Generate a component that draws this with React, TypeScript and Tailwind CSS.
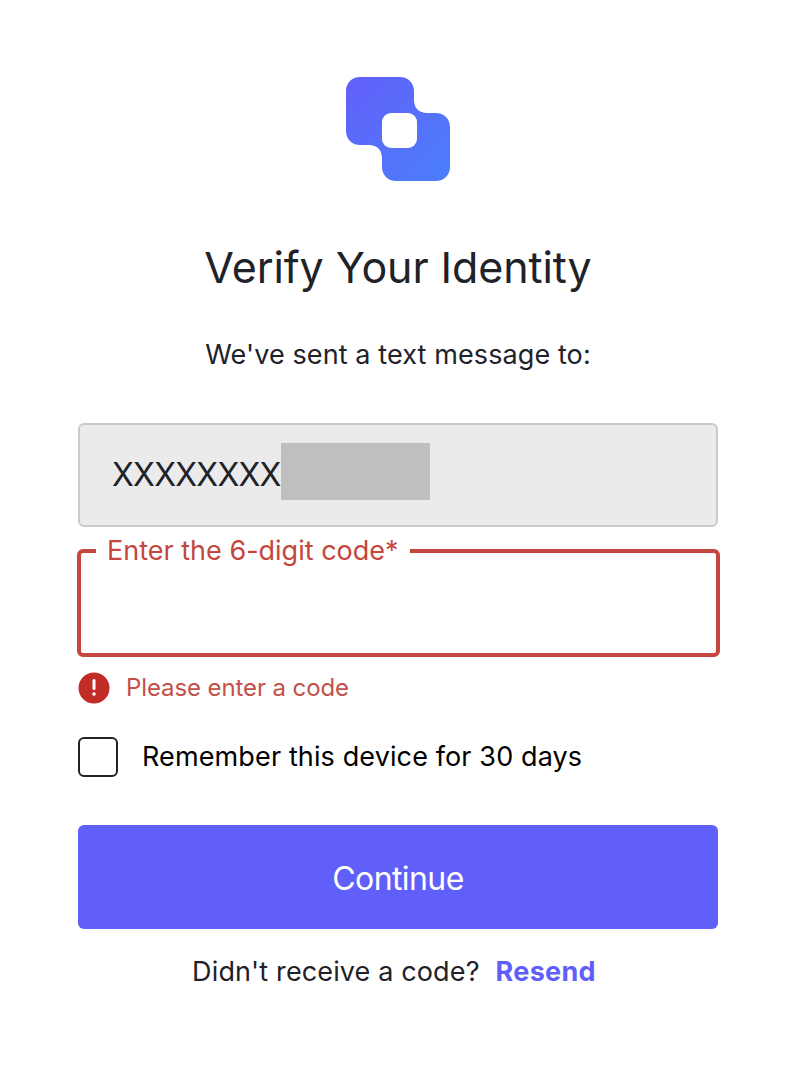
const Logo = () => {
  return (
    <svg width="104" height="104" viewBox="0 0 104 104" aria-label="Logo" className="ml-[2px]">
      <defs>
        <linearGradient id="logo-fill" x1="0" y1="0" x2="1" y2="1">
          <stop offset="0" stopColor="#635ffa" />
          <stop offset="1" stopColor="#4a7ffa" />
        </linearGradient>
      </defs>
      <path
        d="M14 0H54C62 0 68 6 68 14V23C68 31 73 36 81 36H90C98 36 104 42 104 50V90C104 98 98 104 90 104H50C42 104 36 98 36 90V81C36 73 31 68 23 68H14C6 68 0 62 0 54V14C0 6 6 0 14 0Z"
        fill="url(#logo-fill)"
      />
      <rect x="36" y="36" width="35" height="35" rx="9" fill="#fff" />
    </svg>
  );
};

export default function App() {
  return (
    <div className="min-h-[1074px] w-[794px] bg-white font-['Inter',sans-serif] text-[#1f2229]">
      <div className="flex flex-col items-center px-[76px] pt-[77px]">
        <Logo />

        <h1 className="mt-[55px] ml-[2px] text-[43px] leading-[62px] font-normal tracking-[-0.1px]">Verify Your Identity</h1>
        <p className="mt-[39px] ml-[2px] text-[27px] leading-[36px] tracking-[0.1px]">We've sent a text message to:</p>

        <div className="mt-[50px] ml-[2px] flex h-[104px] w-[640px] items-center self-start rounded-md border-2 border-[#c9cacc] bg-[#ebebeb] pl-[32px]">
          <span className="text-[32px] leading-[40px] tracking-[-0.75px]">XXXXXXXX</span>
          <span className="mb-[8px] h-[57px] w-[149px] bg-[#bfbfbf]" />
        </div>

        <fieldset className="mt-[9px] ml-[1px] h-[121px] w-[643px] self-start rounded-md border-4 border-[#c4463e] px-[15px]">
          <legend className="px-[11px] text-[27px] leading-[30px] text-[#c4463e]">Enter the 6-digit code*</legend>
        </fieldset>

        <div className="mt-[15px] ml-[2px] flex items-center gap-[16px] self-start">
          <svg width="32" height="32" viewBox="0 0 32 32" aria-label="Error">
            <circle cx="16" cy="16" r="15.5" fill="#c22c26" />
            <rect x="14.5" y="7" width="3" height="11" rx="1.5" fill="#fff" />
            <circle cx="16" cy="22" r="1.8" fill="#fff" />
          </svg>
          <span className="text-[24px] leading-[32px] tracking-[-0.1px] text-[#c4504a]">Please enter a code</span>
        </div>

        <label className="mt-[33px] ml-[2px] flex items-center gap-[24px] self-start">
          <span className="h-[40px] w-[40px] rounded-md border-2 border-[#1f2229]" />
          <span className="text-[27px] leading-[40px] tracking-[0.12px] text-black">Remember this device for 30 days</span>
        </label>

        <button className="mt-[48px] ml-[2px] h-[104px] w-[640px] self-start rounded-md bg-[#615ffa] pt-[4px] text-[32px] tracking-[-0.6px] text-white">
          Continue
        </button>

        <p className="mt-[25px] ml-[-6px] text-[27px] leading-[36px] tracking-[0.13px]">
          Didn't receive a code?
          <a className="ml-[16px] font-bold tracking-[0.3px] text-[#615ffa]">Resend</a>
        </p>
      </div>
    </div>
  );
}
